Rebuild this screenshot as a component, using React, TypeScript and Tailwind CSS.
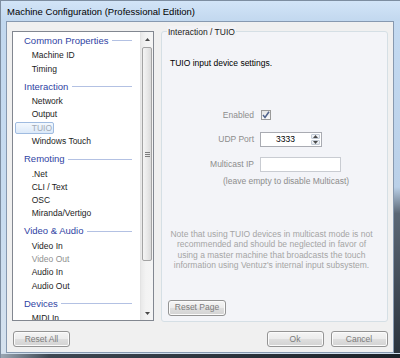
import React from 'react';

const groups = [
  { title: 'Common Properties', items: ['Machine ID', 'Timing'] },
  { title: 'Interaction', items: ['Network', 'Output', 'TUIO', 'Windows Touch'] },
  { title: 'Remoting', items: ['.Net', 'CLI / Text', 'OSC', 'Miranda/Vertigo'] },
  { title: 'Video & Audio', items: ['Video In', 'Video Out', 'Audio In', 'Audio Out'] },
  { title: 'Devices', items: ['MIDI In'] },
];

const btn =
  'flex items-center justify-center h-[16px] w-[57px] rounded-[3px] border border-[#949494] bg-[linear-gradient(to_bottom,#f5f5f5_0%,#ececec_48%,#dedede_52%,#d3d3d3_100%)] text-[8.5px] text-[#7b7b7b] shadow-[inset_0_0_0_1px_#fbfbfb]';

function Arrow({ up }: { up?: boolean }) {
  return (
    <svg width="5" height="3" viewBox="0 0 5 3">
      <path d={up ? 'M0 3 L2.5 0 L5 3 Z' : 'M0 0 L2.5 3 L5 0 Z'} fill="#4a4a4a" />
    </svg>
  );
}

function ListPanel() {
  return (
    <div className="h-[290px] flex border border-[#828790] bg-white overflow-hidden">
      <div className="flex-1 pt-[0.3px] overflow-hidden">
        {groups.map((g, gi) => (
          <div key={g.title} className={gi > 0 ? 'mt-[2.8px]' : ''}>
            <div className="flex items-center h-[16.8px] pl-[11px] pr-[8.3px] gap-[3.5px]">
              <span className="text-[9.5px] text-[#2f43a3] whitespace-nowrap">{g.title}</span>
              <div className="flex-1 h-px bg-[#b3c1e3]" />
            </div>
            {g.items.map((it) => {
              const selected = it === 'TUIO';
              const disabled = it === 'Video Out';
              return (
                <div key={it} className="h-[13.2px] flex items-center">
                  <span
                    className={
                      'ml-[2px] h-[12.3px] pl-[15.7px] pr-[1px] flex items-center rounded-[2px] border whitespace-nowrap text-[8.5px] ' +
                      (selected
                        ? 'border-[#9fbbe0] bg-[linear-gradient(to_bottom,#f3f8fe,#dce9f9)] text-[#a3abb6]'
                        : disabled
                        ? 'border-transparent text-[#8f8f8f]'
                        : 'border-transparent text-[#1c1c1c]')
                    }
                  >
                    {it}
                  </span>
                </div>
              );
            })}
          </div>
        ))}
      </div>
      <div className="w-[13px] flex flex-col border-l border-[#e3e3e3] bg-[linear-gradient(to_right,#e9e9e9,#f3f3f3_40%,#f5f5f5)]">
        <div className="h-[14px] flex items-center justify-center">
          <Arrow up />
        </div>
        <div className="mt-[1px] mx-[1px] h-[214px] rounded-[2px] border border-[#a3a3a3] bg-[linear-gradient(to_right,#f4f4f4,#e9e9e9_50%,#dadada)] flex flex-col items-center justify-center gap-[1px]">
          <div className="w-[5px] h-px bg-[#7d7d7d]" />
          <div className="w-[5px] h-px bg-[#7d7d7d]" />
          <div className="w-[5px] h-px bg-[#7d7d7d]" />
        </div>
        <div className="flex-1" />
        <div className="h-[14px] flex items-center justify-center">
          <Arrow />
        </div>
      </div>
    </div>
  );
}

function TuioGroup() {
  return (
    <div className="relative h-[291px] flex flex-col rounded-[3px] border border-[#d5dfe5] bg-[#f3f4f8] text-[8.5px]">
      <span className="absolute -top-[6px] left-[5px] px-[1px] leading-[12px] bg-[#f2f2f5] text-[#1a1a1a]">
        Interaction / TUIO
      </span>
      <div className="pt-[25px] pl-[8px] leading-[12px] text-black">TUIO input device settings.</div>

      <div className="mt-[40px] h-[12px] flex items-center">
        <span className="w-[92px] text-right text-[#8d8d8d]">Enabled</span>
        <div className="ml-[7px] w-[10px] h-[10px] border border-[#9a9a9a] bg-[linear-gradient(to_bottom,#e6e6e6,#fafafa)] flex items-center justify-center">
          <svg width="8" height="8" viewBox="0 0 8 8">
            <path d="M1 4 L3 6.5 L7 0.8" stroke="#50638c" strokeWidth="1.5" fill="none" />
          </svg>
        </div>
      </div>

      <div className="mt-[10.5px] h-[15px] flex items-center">
        <span className="w-[92px] text-right text-[#8d8d8d]">UDP Port</span>
        <div className="ml-[6px] w-[62px] h-[15px] flex border border-[#a9abb2] bg-white">
          <div className="flex-1 flex items-center justify-center text-black">3333</div>
          <div className="w-[11px] flex flex-col gap-px p-px">
            <div className="flex-1 flex items-center justify-center rounded-[1px] border border-[#c3cbd6] bg-[linear-gradient(to_bottom,#f6f8fb,#e2e7ee)]">
              <Arrow up />
            </div>
            <div className="flex-1 flex items-center justify-center rounded-[1px] border border-[#c3cbd6] bg-[linear-gradient(to_bottom,#f6f8fb,#e2e7ee)]">
              <Arrow />
            </div>
          </div>
        </div>
      </div>

      <div className="mt-[10px] h-[15px] flex items-center">
        <span className="w-[92px] text-right text-[#8d8d8d]">Multicast IP</span>
        <div className="ml-[6px] w-[81px] h-[15px] border border-[#c9ccd2] bg-white" />
      </div>

      <div className="mt-[3px] pl-[61px] h-[12px] leading-[12px] text-[#8d8d8d] whitespace-nowrap">
        (leave empty to disable Multicast)
      </div>

      <div className="mt-[42px] pl-[6px] pr-[12px] text-center leading-[10.5px] text-[#a5a5a5] whitespace-nowrap">
        <div>Note that using TUIO devices in multicast mode is not</div>
        <div>recommended and should be neglected in favor of</div>
        <div>using a master machine that broadcasts the touch</div>
        <div>information using Ventuz's internal input subsystem.</div>
      </div>

      <div className="mt-auto mb-[5.5px] ml-[6px]">
        <div className={btn + ' w-[58px] h-[16.5px]'}>Reset Page</div>
      </div>
    </div>
  );
}

export default function App() {
  return (
    <div className="w-[400px] h-[358px] flex flex-col overflow-hidden border-t border-l border-[#7d8da0] bg-[#c2d8ef] font-['Liberation_Sans',Arial,sans-serif]">
      <div className="h-[20px] shrink-0 flex items-center pt-[2px] pl-[6px] text-[9.5px] text-black bg-[linear-gradient(to_bottom,#d2e4f7,#c2d8ef)]">
        Machine Configuration (Professional Edition)
      </div>

      <div className="h-[332px] shrink-0 flex">
        <div className="w-[5px] bg-[linear-gradient(to_bottom,#c2d8ef,#c8dcf0_60%,#d6e2ee)]" />
        <div className="w-[388px] flex border border-[#8799b0] bg-[#f0f0f0] pl-[5px] pt-[9px]">
          <div className="w-[142px] flex flex-col">
            <ListPanel />
            <div className="mt-[10px] ml-[1px]">
              <div className={btn}>Reset All</div>
            </div>
          </div>

          <div className="ml-[7px] w-[227px] flex flex-col">
            <TuioGroup />
            <div className="mt-[9px] flex justify-end gap-[7px] pr-[0.5px]">
              <div className={btn}>Ok</div>
              <div className={btn}>Cancel</div>
            </div>
          </div>
        </div>
        <div className="w-[6px] bg-[linear-gradient(to_bottom,#c4daf1_0%,#bad0e8_50%,#5b6775_58%,#2b333d_100%)]" />
      </div>

      <div className="h-[5px] shrink-0 flex flex-col">
        <div className="h-px bg-[#d0deec]" />
        <div className="flex-1 bg-[linear-gradient(to_right,#9aa6b2,#3d4752_12%,#2a323b_60%,#1b2128)]" />
      </div>
    </div>
  );
}
